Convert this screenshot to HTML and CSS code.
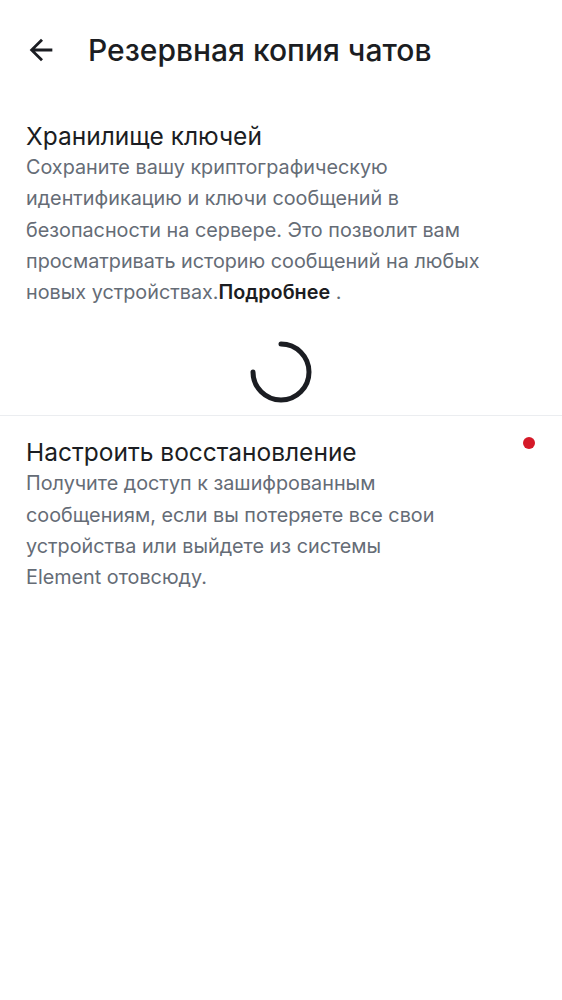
FILE: index.html
```html
<!DOCTYPE html>
<html lang="ru">
<head>
<meta charset="utf-8">
<link rel="stylesheet" href="styles.css">
</head>
<body>
<div class="screen">
  <header class="topbar">
    <button class="back" aria-label="Назад">
      <svg width="34" height="34" viewBox="0 0 24 24"><path d="M20 11H7.83l5.59-5.59L12 4l-8 8 8 8 1.41-1.41L7.83 13H20v-2z" fill="#1b1d22"/></svg>
    </button>
    <h1 class="title">Резервная копия чатов</h1>
  </header>

  <section class="item">
    <div class="item-body">
      <h2 class="item-title">Хранилище ключей</h2>
      <p class="item-desc">Сохраните вашу криптографическую идентификацию и ключи сообщений в безопасности на сервере. Это позволит вам просматривать историю сообщений на любых новых устройствах.<b class="link">Подробнее</b> .</p>
    </div>
  </section>

  <div class="spinner-row">
    <svg width="66" height="66" viewBox="0 0 66 66">
      <path d="M33 5 A28 28 0 1 1 5 33" fill="none" stroke="#1b1d22" stroke-width="5" stroke-linecap="round"/>
    </svg>
  </div>

  <div class="divider"></div>

  <section class="item">
    <div class="item-body">
      <h2 class="item-title">Настроить восстановление</h2>
      <p class="item-desc">Получите доступ к зашифрованным сообщениям, если вы потеряете все свои устройства или выйдете из системы Element отовсюду.</p>
    </div>
    <div class="widget"><span class="dot"></span></div>
  </section>
</div>
</body>
</html>
```

FILE: styles.css
```css
* { box-sizing: border-box; }
html, body { margin: 0; padding: 0; background: #ffffff; }
body { font-family: Inter, Roboto, "Noto Sans", sans-serif; color: #1b1d22; }
.screen { width: 562px; }
.topbar {
  display: flex;
  align-items: center;
  height: 100px;
  padding-left: 24px;
}
.back {
  background: none;
  border: 0;
  padding: 0;
  width: 34px;
  height: 34px;
  display: flex;
  margin-right: 30px;
  cursor: pointer;
}
.title {
  margin: 0;
  font-size: 30px;
  font-weight: 500;
  line-height: 36px;
  color: #1b1d22;
}
.item {
  display: flex;
  align-items: flex-start;
  padding: 20px 26px 0 26px;
}
.item-body { flex: 1; min-width: 0; }
.item-title {
  margin: 0;
  font-size: 24.5px;
  font-weight: 400;
  line-height: 32px;
  color: #1b1d22;
}
.item-desc {
  margin: 0;
  font-size: 19.8px;
  line-height: 31.3px;
  color: #656c76;
}
.link { color: #1b1d22; font-weight: 600; }
.spinner-row {
  display: flex;
  justify-content: center;
  padding: 31px 0 10px;
}
.divider { height: 1px; background: #ebedf0; }
.widget {
  width: 86px;
  display: flex;
  justify-content: flex-end;
  padding-top: 1px;
  padding-right: 1px;
}
.dot {
  width: 12px;
  height: 12px;
  border-radius: 50%;
  background: #d51928;
}
```
